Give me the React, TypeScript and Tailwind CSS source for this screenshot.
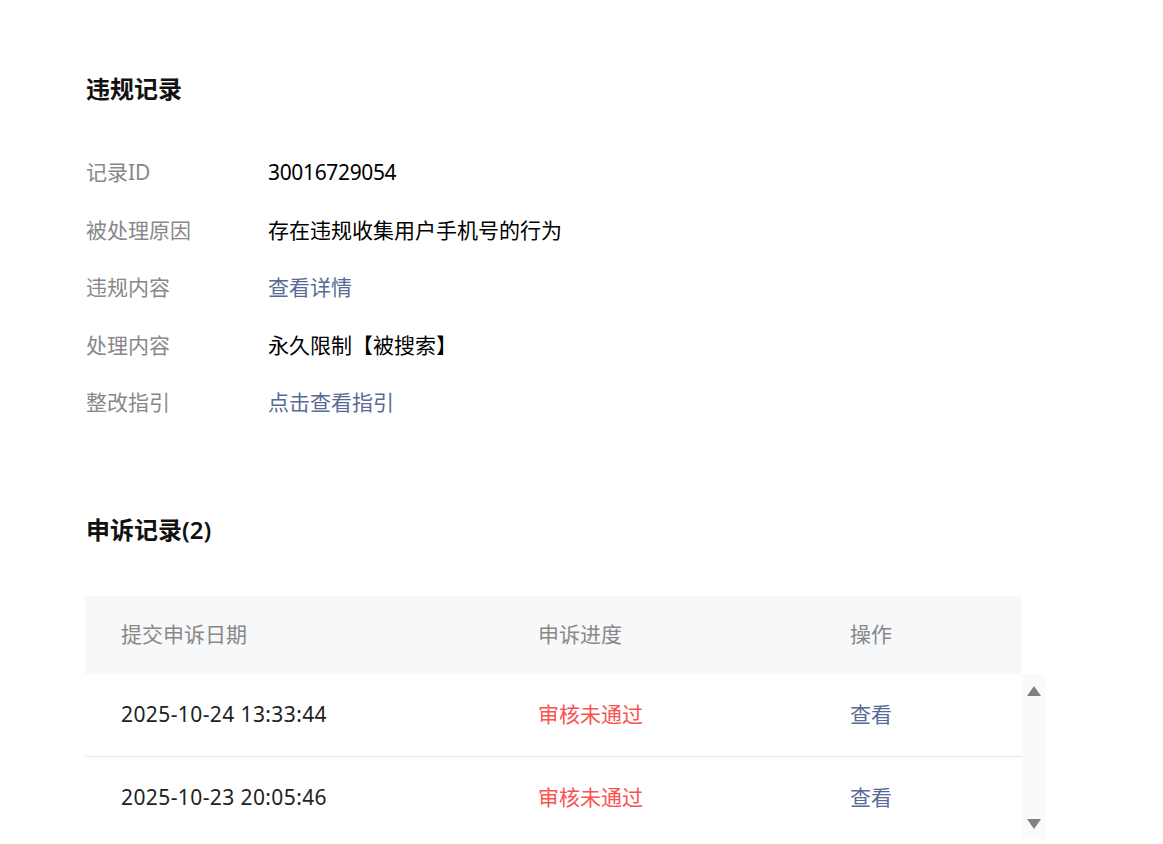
import React from "react";

const font = { fontFamily: '"Noto Sans", "Noto Sans CJK SC", sans-serif' };

const rows: { label: string; value: string; link?: boolean; num?: boolean }[] = [
  { label: "记录ID", value: "30016729054", num: true },
  { label: "被处理原因", value: "存在违规收集用户手机号的行为" },
  { label: "违规内容", value: "查看详情", link: true },
  { label: "处理内容", value: "永久限制【被搜索】" },
  { label: "整改指引", value: "点击查看指引", link: true },
];

const records = [
  { date: "2025-10-24 13:33:44", status: "审核未通过" },
  { date: "2025-10-23 20:05:46", status: "审核未通过" },
];

export default function App() {
  return (
    <div
      className="w-[1163px] h-[844px] overflow-hidden bg-white pl-[85px] pt-[71px]"
      style={font}
    >
      <h2 className="text-[24px] leading-[36px] font-semibold text-[#111111] pl-px">违规记录</h2>
      <div className="mt-[37px] flex flex-col pl-px">
        {rows.map((r) => (
          <div key={r.label} className="flex items-center h-[57.5px] text-[21px]">
            <div className="w-[182px] text-[#888888]">{r.label}</div>
            <div
              className={`${r.link ? "text-[#576b95]" : "text-[#000000]"} ${r.num ? "tracking-[-0.35px]" : ""}`}
            >
              {r.value}
            </div>
          </div>
        ))}
      </div>
      <h2 className="mt-[80px] text-[24px] leading-[36px] font-semibold text-[#111111] pl-px">申诉记录(2)</h2>
      <div className="mt-[48px] w-[960px]">
        <div className="w-[937px] h-[78px] bg-[#f7f8fa] flex items-center text-[21px] text-[#888888]">
          <div className="w-[453px] pl-[36px]">提交申诉日期</div>
          <div className="w-[312px]">申诉进度</div>
          <div>操作</div>
        </div>
        <div className="flex">
          <div className="w-[937px] flex flex-col">
            {records.map((r, i) => (
              <div
                key={r.date}
                className={`h-[83px] flex items-center text-[21px] ${i === 0 ? "border-b border-[#e6e6e6]" : ""}`}
              >
                <div className="w-[453px] pl-[36px] text-[#222222] tracking-[0.4px]">{r.date}</div>
                <div className="w-[312px] text-[#fa5151]">{r.status}</div>
                <div className="text-[#576b95]">查看</div>
              </div>
            ))}
          </div>
          <div className="w-[23px] h-[165px] bg-[#fafafa] flex flex-col items-center justify-between pt-[12px] pb-[10px]">
            <div className="w-0 h-0 border-l-[7px] border-r-[7px] border-b-[10px] border-l-transparent border-r-transparent border-b-[#808080]" />
            <div className="w-0 h-0 border-l-[7px] border-r-[7px] border-t-[10px] border-l-transparent border-r-transparent border-t-[#808080]" />
          </div>
        </div>
      </div>
    </div>
  );
}
